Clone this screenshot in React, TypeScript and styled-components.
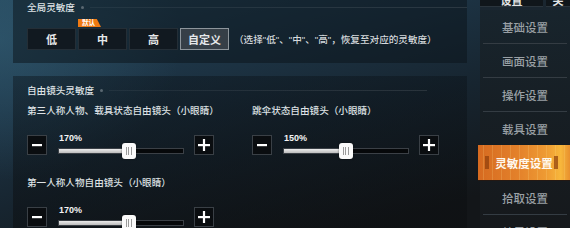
import React from "react";
import styled, { createGlobalStyle, css } from "styled-components";

const GlobalStyle = createGlobalStyle`
  html, body {
    margin: 0;
    padding: 0;
    background: #121518;
  }
  body {
    font-family: "Liberation Sans", "Noto Sans CJK SC", sans-serif;
  }
`;

const Screen = styled.div`
  width: 570px;
  height: 228px;
  overflow: hidden;
  display: flex;
  background:
    radial-gradient(ellipse 260px 200px at 0px 40px, rgba(52, 96, 120, 0.55), transparent 70%),
    linear-gradient(165deg, #25465a 0%, #1d3445 30%, #172530 55%, #131619 85%);
`;

const Main = styled.div`
  width: 454px;
  margin-left: 13px;
  display: flex;
  flex-direction: column;
`;

const Panel = styled.section<{ $grow?: boolean }>`
  background: rgba(10, 17, 23, 0.5);
  padding-left: 14px;
  ${(p) =>
    p.$grow
      ? css`
          flex: 1;
          padding-top: 7px;
          background: linear-gradient(180deg, rgba(10, 17, 23, 0.42), rgba(12, 14, 16, 0.55));
        `
      : css`
          height: 63px;
          flex-shrink: 0;
        `}
`;

const PanelGap = styled.div`
  height: 13px;
  flex-shrink: 0;
`;

const TitleRow = styled.div<{ $lineEnd: number }>`
  display: flex;
  align-items: center;
  gap: 6px;
  height: 14px;
  padding-right: ${(p) => p.$lineEnd}px;
  font-size: 9.6px;
  font-weight: 500;
  color: #dfe3e6;
`;

const Dot = styled.span`
  width: 3px;
  height: 3px;
  border-radius: 50%;
  background: #5a6872;
`;

const TitleLine = styled.span`
  flex: 1;
  height: 1px;
  background: linear-gradient(90deg, rgba(255, 255, 255, 0.05), rgba(255, 255, 255, 0.1));
`;

const ModeRow = styled.div`
  display: flex;
  align-items: center;
  gap: 2px;
  margin-top: 14px;
`;

const ModeButton = styled.div<{ $active?: boolean }>`
  position: relative;
  box-sizing: border-box;
  width: 49px;
  height: 22px;
  display: flex;
  align-items: center;
  justify-content: center;
  font-size: 11px;
  font-weight: 700;
  color: #e6e8ea;
  background: ${(p) => (p.$active ? "#363f47" : "#111920")};
  border: 1px solid ${(p) => (p.$active ? "#8d959b" : "#242e36")};
`;

const Badge = styled.span`
  position: absolute;
  left: -1px;
  top: -10px;
  width: 23px;
  height: 8px;
  background: #f07a12;
  clip-path: polygon(0 0, 82% 0, 100% 100%, 0 100%);
  color: #fff;
  font-size: 6.5px;
  line-height: 8px;
  padding-left: 4px;
  box-sizing: border-box;
`;

const Hint = styled.span`
  margin-left: 3px;
  font-size: 9.6px;
  font-weight: 500;
  color: #d5d9dc;
`;

const SliderGrid = styled.div`
  display: grid;
  grid-template-columns: 225px 225px;
  row-gap: 17px;
  margin-top: 7px;
`;

const SliderBlock = styled.div``;

const SliderLabel = styled.div`
  height: 14px;
  line-height: 14px;
  font-size: 9.6px;
  font-weight: 500;
  color: #dde1e4;
  white-space: nowrap;
`;

const Control = styled.div`
  display: flex;
  align-items: flex-start;
  margin-top: 15px;
`;

const StepButton = styled.div`
  box-sizing: border-box;
  width: 20px;
  height: 20px;
  margin-top: 2px;
  display: flex;
  align-items: center;
  justify-content: center;
  background: #0a0d10;
  border: 1px solid #3a4046;
`;

const Middle = styled.div`
  width: 126px;
  margin: 0 10px 0 11px;
`;

const Percent = styled.div`
  height: 10px;
  line-height: 10px;
  padding-left: 1px;
  font-size: 9px;
  font-weight: 700;
  color: #f4f4f4;
`;

const TrackWrap = styled.div`
  position: relative;
  height: 16px;
  display: flex;
  align-items: center;
`;

const Track = styled.div`
  box-sizing: border-box;
  width: 100%;
  height: 6px;
  background: #06080a;
  border: 1px solid #3b4046;
`;

const Fill = styled.div`
  height: 100%;
  background: linear-gradient(180deg, #ececec, #bcbcbc);
`;

const Thumb = styled.div`
  position: absolute;
  top: 0;
  width: 14px;
  height: 16px;
  margin-left: -7px;
  border-radius: 3px;
  background:
    linear-gradient(90deg, transparent 4px, #9a9a9a 4px, #9a9a9a 5px, transparent 5px,
      transparent 6.5px, #9a9a9a 6.5px, #9a9a9a 7.5px, transparent 7.5px,
      transparent 9px, #9a9a9a 9px, #9a9a9a 10px, transparent 10px) center / 14px 8px no-repeat,
    #fafafa;
  box-shadow: 0 0 2px rgba(0, 0, 0, 0.6);
`;

const Side = styled.nav`
  width: 90px;
  margin-left: 13px;
  display: flex;
  flex-direction: column;
  background: linear-gradient(180deg, rgba(24, 36, 44, 0.9), rgba(22, 25, 28, 0.95));
`;

const SideHeader = styled.div`
  flex-shrink: 0;
  display: flex;
  gap: 3px;
  height: 10px;
  background: #1a2630;
`;

const HeaderTab = styled.div<{ $w: number }>`
  width: ${(p) => p.$w}px;
  height: 6px;
  overflow: hidden;
  display: flex;
  align-items: flex-end;
  justify-content: center;
  background: #10161b;
  border-bottom: 1px solid #2a343c;
  color: #e2e4e6;
  font-size: 11px;
  font-weight: 700;
  line-height: 10px;
`;

const SideItem = styled.div<{ $active?: boolean }>`
  position: relative;
  flex-shrink: 0;
  height: 33px;
  display: flex;
  align-items: center;
  justify-content: center;
  font-size: 11.5px;
  font-weight: 500;
  color: #9aa0a5;
  ${(p) =>
    p.$active &&
    css`
      height: 35px;
      margin-left: -2px;
      color: #fff8ee;
      font-weight: 700;
      background:
        repeating-linear-gradient(90deg, rgba(255, 230, 150, 0) 0 5px, rgba(255, 230, 150, 0.18) 5px 6px, rgba(255, 230, 150, 0) 6px 9px),
        linear-gradient(90deg, #d66a20 0%, #e4822b 45%, #ef9c33 75%, #f7b73c 90%, #e8902e 100%);
      border-bottom: 1px solid #241812;
      &::before,
      &::after {
        content: "";
        position: absolute;
        top: 11px;
        width: 4px;
        height: 13px;
        background: radial-gradient(circle, rgba(140, 60, 10, 0.7) 0.7px, transparent 1px) 0 0 / 2px 2px;
      }
      &::before {
        left: 7px;
      }
      &::after {
        right: 12px;
      }
    `}
`;

const SideSep = styled.div`
  flex-shrink: 0;
  height: 1px;
  margin: 0 3px;
  background: #343c43;
`;

function Minus() {
  return (
    <svg width="12" height="12" viewBox="0 0 12 12">
      <rect x="1" y="5" width="10" height="2.2" fill="#fff" />
    </svg>
  );
}

function Plus() {
  return (
    <svg width="14" height="14" viewBox="0 0 14 14">
      <rect x="1" y="6" width="12" height="2.2" fill="#fff" />
      <rect x="5.9" y="1" width="2.2" height="12" fill="#fff" />
    </svg>
  );
}

type SliderSpec = { label: string; value: number };

const sliders: SliderSpec[] = [
  { label: "第三人称人物、载具状态自由镜头（小眼睛）", value: 170 },
  { label: "跳伞状态自由镜头（小眼睛）", value: 150 },
  { label: "第一人称人物自由镜头（小眼睛）", value: 170 },
];

function Slider({ label, value }: SliderSpec) {
  const pct = (value / 300) * 100;
  return (
    <SliderBlock>
      <SliderLabel>{label}</SliderLabel>
      <Control>
        <StepButton>
          <Minus />
        </StepButton>
        <Middle>
          <Percent>{value}%</Percent>
          <TrackWrap>
            <Track>
              <Fill style={{ width: `${pct}%` }} />
            </Track>
            <Thumb style={{ left: `${pct}%` }} />
          </TrackWrap>
        </Middle>
        <StepButton>
          <Plus />
        </StepButton>
      </Control>
    </SliderBlock>
  );
}

const modes = ["低", "中", "高", "自定义"];
const menu = ["基础设置", "画面设置", "操作设置", "载具设置", "灵敏度设置", "拾取设置", "效果设置"];

export default function App() {
  return (
    <>
      <GlobalStyle />
      <Screen>
        <Main>
          <Panel>
            <TitleRow $lineEnd={0}>
              全局灵敏度
              <Dot />
              <TitleLine />
            </TitleRow>
            <ModeRow>
              {modes.map((m, i) => (
                <ModeButton key={m} $active={i === 3}>
                  {i === 1 && <Badge>默认</Badge>}
                  {m}
                </ModeButton>
              ))}
              <Hint>（选择"低"、"中"、"高"，恢复至对应的灵敏度）</Hint>
            </ModeRow>
          </Panel>
          <PanelGap />
          <Panel $grow>
            <TitleRow $lineEnd={40}>
              自由镜头灵敏度
              <Dot />
              <TitleLine />
            </TitleRow>
            <SliderGrid>
              {sliders.map((s) => (
                <Slider key={s.label} {...s} />
              ))}
            </SliderGrid>
          </Panel>
        </Main>
        <Side>
          <SideHeader>
            <HeaderTab $w={63}>设置</HeaderTab>
            <HeaderTab $w={24}>关</HeaderTab>
          </SideHeader>
          {menu.map((item, i) => (
            <React.Fragment key={item}>
              <SideItem $active={i === 4}>{item}</SideItem>
              {i !== 3 && i !== 4 && <SideSep />}
            </React.Fragment>
          ))}
        </Side>
      </Screen>
    </>
  );
}
